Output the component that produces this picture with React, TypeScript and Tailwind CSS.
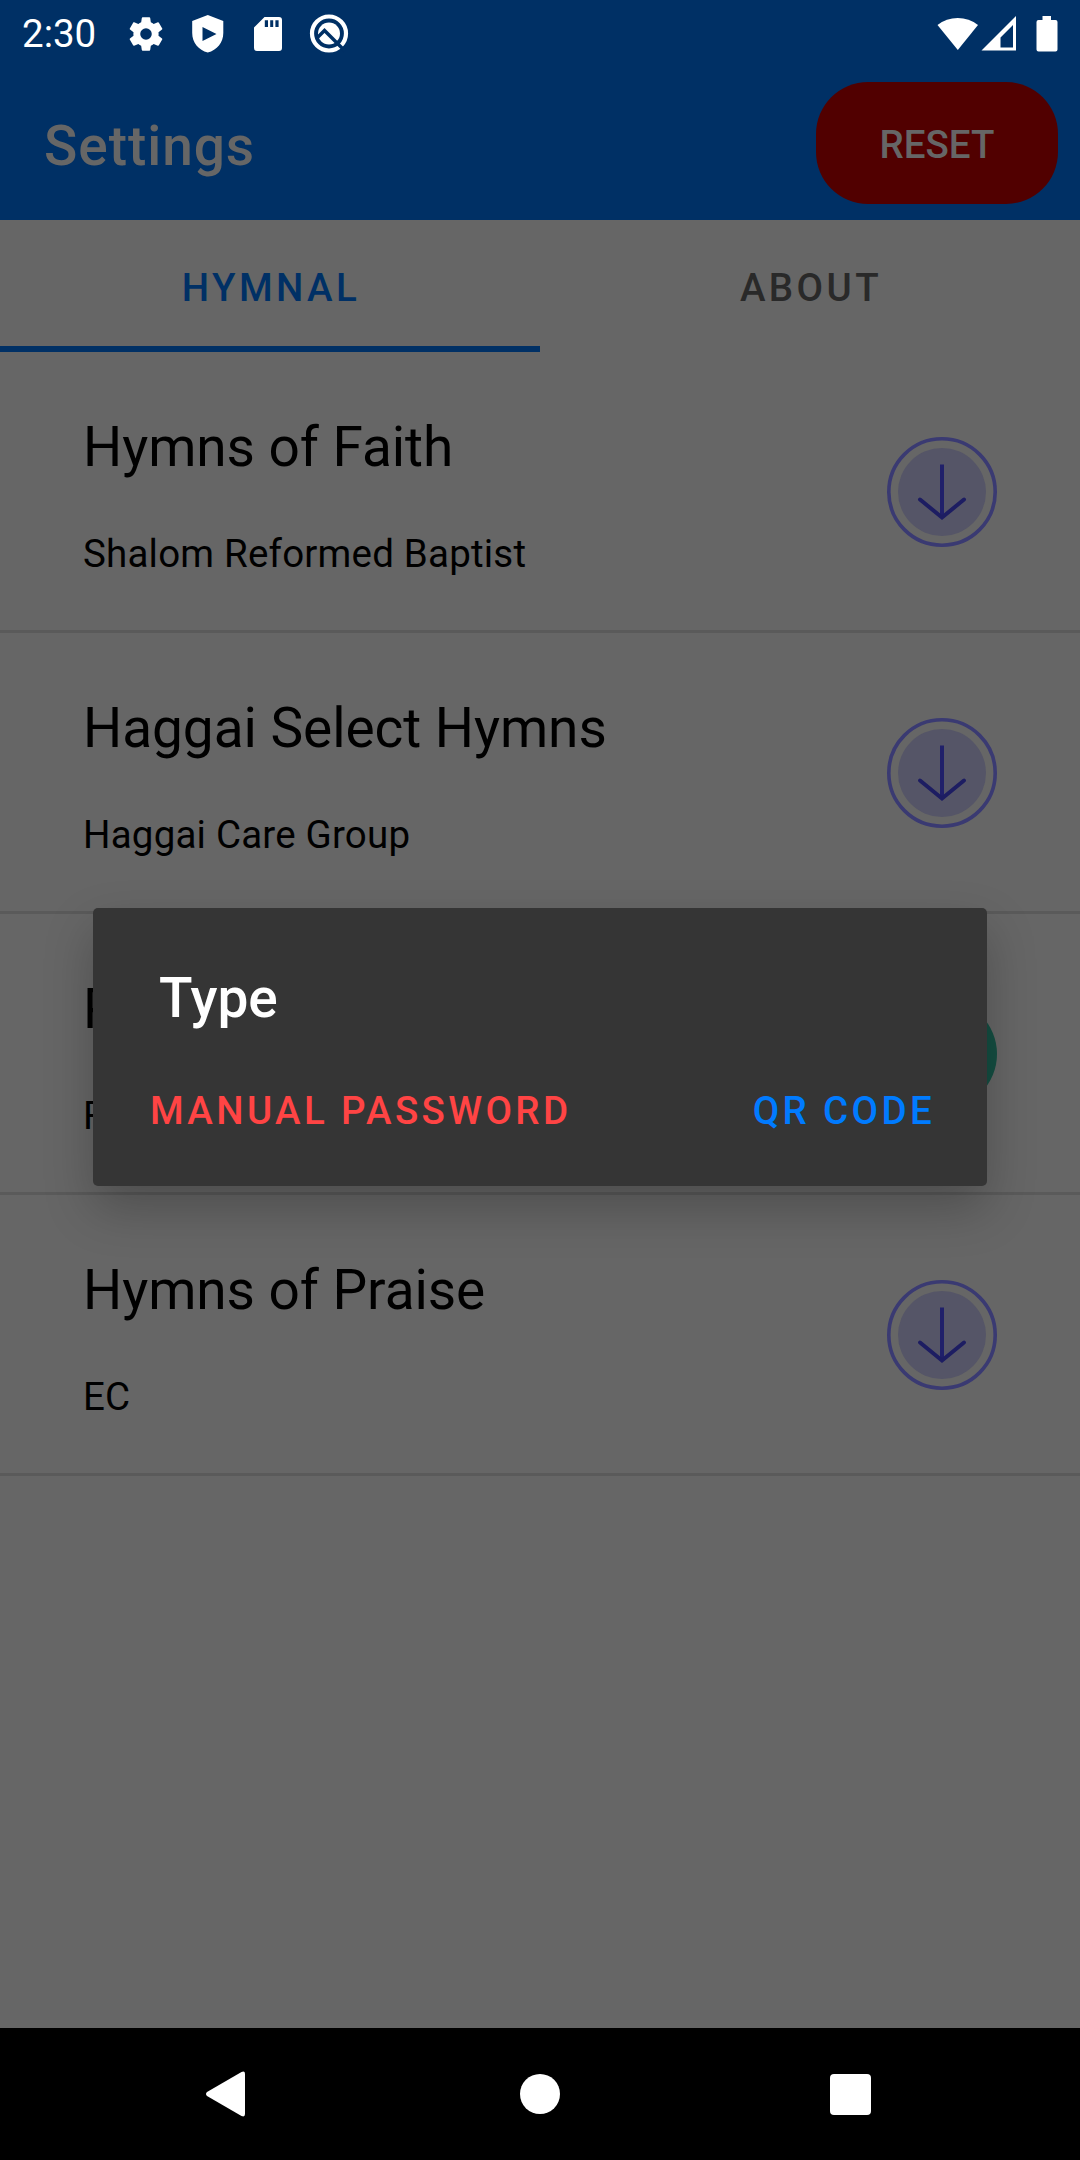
import React from 'react';

interface Hymnal {
  title: string;
  group: string;
  downloaded: boolean;
}

const hymnals: Hymnal[] = [
  { title: 'Hymns of Faith', group: 'Shalom Reformed Baptist', downloaded: false },
  { title: 'Haggai Select Hymns', group: 'Haggai Care Group', downloaded: false },
  { title: 'P', group: 'F', downloaded: true },
  { title: 'Hymns of Praise', group: 'EC', downloaded: false },
];

const DownloadIcon: React.FC = () => (
  <svg className="w-[110px] h-[110px] mt-[2px]" viewBox="0 0 110 110" fill="none">
    <circle cx="55" cy="55" r="53.2" stroke="#3a3a72" strokeWidth="3.6" />
    <circle cx="55" cy="55" r="44" fill="#555567" />
    <path d="M55 27.5V81" stroke="#20206a" strokeWidth="4" />
    <path d="M33 62.5L55 80.5L77 62.5" stroke="#1d1d62" strokeWidth="4" strokeLinecap="round" />
  </svg>
);

const DoneIcon: React.FC = () => (
  <svg className="w-[110px] h-[110px] mt-[2px]" viewBox="0 0 110 110" fill="none">
    <circle cx="55" cy="55" r="55" fill="#154e42" />
    <path d="M32 56L49 72L78 40" stroke="#666" strokeWidth="5" />
  </svg>
);

const StatusBar: React.FC = () => (
  <div className="h-[66px] pt-[2px] pl-[22px] pr-[20px] flex items-center text-white">
    <span className="w-[74px] text-[38.5px] leading-none">2:30</span>
    <div className="flex items-center ml-[29px]">
      {/* Settings */}
      <svg className="w-[42px] h-[42px]" viewBox="0 0 24 24" fill="currentColor">
        <path d="M19.14 12.94c.04-.3.06-.61.06-.94 0-.32-.02-.64-.07-.94l2.03-1.58a.49.49 0 0 0 .12-.61l-1.92-3.32a.488.488 0 0 0-.59-.22l-2.39.96c-.5-.38-1.03-.7-1.62-.94l-.36-2.54a.484.484 0 0 0-.48-.41h-3.84c-.24 0-.43.17-.47.41l-.36 2.54c-.59.24-1.13.57-1.62.94l-2.39-.96c-.22-.08-.47 0-.59.22L2.74 8.87c-.12.21-.08.47.12.61l2.03 1.58c-.05.3-.09.63-.09.94s.02.64.07.94l-2.03 1.58a.49.49 0 0 0-.12.61l1.92 3.32c.12.22.37.29.59.22l2.39-.96c.5.38 1.03.7 1.62.94l.36 2.54c.05.24.24.41.48.41h3.84c.24 0 .44-.17.47-.41l.36-2.54c.59-.24 1.13-.56 1.62-.94l2.39.96c.22.08.47 0 .59-.22l1.92-3.32c.12-.22.07-.47-.12-.61l-2.01-1.58zM12 15.3A3.3 3.3 0 1 1 12 8.7a3.3 3.3 0 0 1 0 6.6z" />
      </svg>
      {/* Play protect */}
      <svg className="w-[32px] h-[38px] ml-[25px]" viewBox="0 0 32 38" fill="currentColor" fillRule="evenodd">
        <path d="M15.8 0L31.3 6V18C31.3 27.5 25 35 15.8 37.6C6.5 35 .2 27.5 .2 18V6ZM10.5 12V26L24.5 19Z" />
      </svg>
      {/* SD card */}
      <svg className="w-[28px] h-[36px] ml-[30px]" viewBox="0 0 28 36" fill="currentColor" fillRule="evenodd">
        <path d="M10.5 1H25A3 3 0 0 1 28 4V32A3 3 0 0 1 25 35H3A3 3 0 0 1 0 32V11.5ZM10.8 4.3V11H14V4.3ZM16.2 4.3V11H19.2V4.3ZM21.4 4.3V11H24.6V4.3Z" />
      </svg>
      {/* Android Q */}
      <svg className="w-[40px] h-[40px] ml-[27px]" viewBox="0 0 40 40" fill="none">
        <circle cx="20" cy="19.5" r="17" stroke="currentColor" strokeWidth="4.2" />
        <circle cx="20" cy="19.5" r="11" fill="currentColor" />
        <path d="M8.5 23.5L15.5 16.5L36 37" stroke="#003065" strokeWidth="3.4" />
      </svg>
    </div>
    <div className="flex items-center ml-auto">
      <svg className="w-[42px] h-[36px]" viewBox="0 0 42 36" fill="currentColor">
        <path d="M0.5 9A33 33 0 0 1 41 9L20.8 34Z" />
      </svg>
      <svg className="w-[35px] h-[36px] ml-[2px]" viewBox="0 0 35 36" fill="currentColor" fillRule="evenodd">
        <path d="M35 0V34.5H0.5ZM32 9L19.5 21.5V31.5H32Z" />
      </svg>
      <svg className="w-[22px] h-[36px] ml-[20px] mr-[2px]" viewBox="0 0 22 36" fill="currentColor">
        <path d="M6.5 0H15V4H19.5A2 2 0 0 1 21.5 6V33.5A2 2 0 0 1 19.5 35.5H2.5A2 2 0 0 1 .5 33.5V6A2 2 0 0 1 2.5 4H6.5Z" />
      </svg>
    </div>
  </div>
);

const HymnalRow: React.FC<{ hymnal: Hymnal }> = ({ hymnal }) => (
  <li className="h-[281px] border-b-3 border-[#5a5a5a] px-[83px] flex items-center justify-between">
    <div className="pt-[9px] text-black">
      <h2 className="text-[55px] leading-[64px] tracking-[-0.06px]">{hymnal.title}</h2>
      <p className="mt-[52px] text-[38.5px] leading-[46px] tracking-[0.2px]">{hymnal.group}</p>
    </div>
    {hymnal.downloaded ? <DoneIcon /> : <DownloadIcon />}
  </li>
);

const NavigationBar: React.FC = () => (
  <nav className="h-[132px] bg-black text-white flex items-center justify-between pl-[206px] pr-[209px]">
    <svg className="w-[40px] h-[46px]" viewBox="0 0 40 46" fill="currentColor">
      <path d="M1 21L35.5 1Q39 -0.5 39 3V43Q39 46.5 35.5 45L1 25Q-1 23 1 21Z" />
    </svg>
    <div className="w-[40px] h-[40px] ml-[3px] rounded-full bg-white" />
    <div className="w-[41px] h-[41px] rounded-[4px] bg-white" />
  </nav>
);

const TypeDialog: React.FC = () => (
  <div className="absolute left-[93px] top-[908px] w-[894px] h-[278px] rounded-[5px] bg-[#353535] shadow-[0_22px_50px_rgba(0,0,0,0.24)] pt-[57px]">
    <h3 className="pl-[66px] text-[55px] leading-[66px] font-medium text-white">Type</h3>
    <div className="flex justify-between mt-[57px] pl-[57px] pr-[52px] text-[38.5px] leading-[46px] font-medium tracking-[3.35px]">
      <button className="text-[#ff4444]">MANUAL PASSWORD</button>
      <button className="text-[#007bff]">QR CODE</button>
    </div>
  </div>
);

const App: React.FC = () => {
  return (
    <div className="relative w-[1080px] h-[2160px] flex flex-col bg-[#666666] font-['Roboto',sans-serif] overflow-hidden">
      <header className="h-[220px] bg-[#003065]">
        <StatusBar />
        <div className="h-[154px] pl-[44px] pr-[22px] flex items-center justify-between text-[#666666] font-medium">
          <h1 className="text-[55px] leading-[64px] pt-[6px] tracking-[0.95px]">Settings</h1>
          <button className="w-[242px] h-[122px] pt-[3px] rounded-[52px] bg-[#510000] text-[38.5px]">RESET</button>
        </div>
      </header>

      <div className="h-[132px] grid grid-cols-2 text-[38.5px] font-medium tracking-[3.44px]">
        <button className="text-[#003065] border-b-6 border-[#003065] pt-[9px] pl-[2px]">HYMNAL</button>
        <button className="text-[#292929] border-b-6 border-transparent pt-[9px] pl-[2px]">ABOUT</button>
      </div>

      <ul className="flex-1">
        {hymnals.map((hymnal) => (
          <HymnalRow key={hymnal.title} hymnal={hymnal} />
        ))}
      </ul>

      <NavigationBar />
      <TypeDialog />
    </div>
  );
};

export default App;
